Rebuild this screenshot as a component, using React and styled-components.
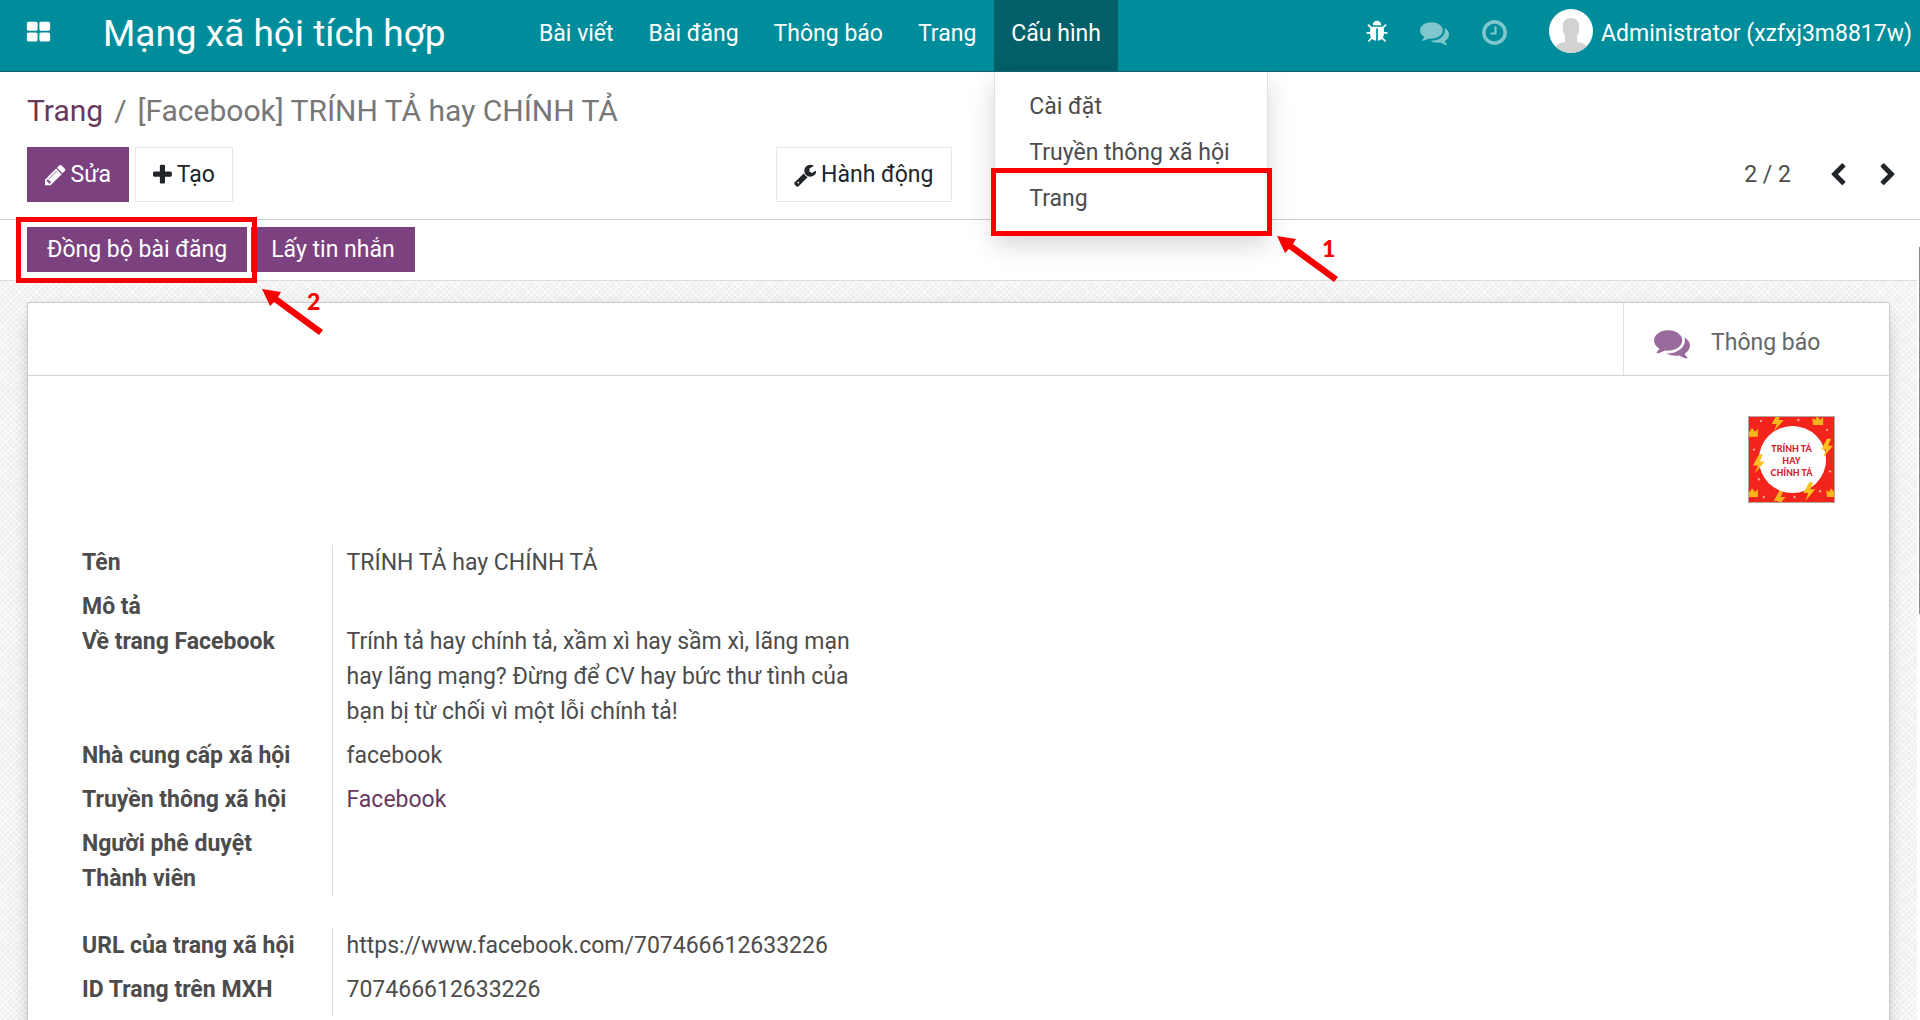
import React from 'react';
import styled, { createGlobalStyle, css } from 'styled-components';

const GlobalStyle = createGlobalStyle`
  * {
    box-sizing: border-box;
  }

  html,
  body,
  #root {
    height: 100%;
    margin: 0;
  }

  body {
    background: #fff;
    color: #4c4c4c;
    font-family: Roboto, 'Noto Sans', sans-serif;
    font-size: 23px;
    line-height: 35px;
    overflow: hidden;
  }

  a {
    color: #68395f;
    text-decoration: none;
  }

  button {
    font: inherit;
    cursor: pointer;
  }
`;

const Page = styled.div`
  display: flex;
  flex-direction: column;
  height: 100%;
`;

/* ---------- icons ---------- */

// left edge and width of every glyph, on a 1792 unit square
const BOXES = {
  pencil: [128, 1536],
  plus: [192, 1408],
  wrench: [64, 1664],
};

const ICONS = {
  apps:
    'M832 1024v384q0 52-38 90t-90 38h-512q-52 0-90-38t-38-90v-384q0-52 38-90t90-38h512q52 0 90 38t38 90zm0-768v384q0 52-38 90t-90 38h-512q-52 0-90-38t-38-90v-384q0-52 38-90t90-38h512q52 0 90 38t38 90zm896 768v384q0 52-38 90t-90 38h-512q-52 0-90-38t-38-90v-384q0-52 38-90t90-38h512q52 0 90 38t38 90zm0-768v384q0 52-38 90t-90 38h-512q-52 0-90-38t-38-90v-384q0-52 38-90t90-38h512q52 0 90 38t38 90z',
  bug:
    'M1696 960q0 26-19 45t-45 19h-224q0 171-67 290l208 209q19 19 19 45t-19 45q-18 19-45 19t-45-19l-198-197q-5 5-15 13t-42 28.5-65 36.5-82 29-97 13v-896h-128v896q-51 0-101.5-13.5t-87-33-66-39-43.5-32.5l-15-14-183 207q-20 21-48 21-24 0-43-16-19-18-20.5-44.5t15.5-46.5l202-227q-58-114-58-274h-224q-26 0-45-19t-19-45 19-45 45-19h224v-294l-173-173q-19-19-19-45t19-45 45-19 45 19l173 173h844l173-173q19-19 45-19t45 19 19 45-19 45l-173 173v294h224q26 0 45 19t19 45zm-480-576h-640q0-133 93.5-226.5t226.5-93.5 226.5 93.5 93.5 226.5z',
  comments:
    'M1408 768q0 139-94 257t-256.5 186.5-353.5 68.5q-86 0-176-16-124 88-278 128-36 9-86 16h-3q-11 0-20.5-8t-11.5-21q-1-3-1-6.5t.5-6.5 2-6l2.5-5 3.5-5.5 4-5 4.5-5 4-4.5q5-6 23-25t26-29.5 22.5-29 25-38.5 20.5-44q-124-72-195-177t-71-224q0-139 94-257t256.5-186.5 353.5-68.5 353.5 68.5 256.5 186.5 94 257zm384 256q0 120-71 224.5t-195 176.5q10 24 20.5 44t25 38.5 22.5 29 26 29.5 23 25q1 1 4 4.5t4.5 5 4 5 3.5 5.5l2.5 5 2 6 .5 6.5-1 6.5q-3 14-13 22t-22 7q-50-7-86-16-154-40-278-128-90 16-176 16-271 0-472-132 58 4 88 4 161 0 309-45t264-129q125-92 192-212t67-254q0-77-23-152 129 71 204 178t75 230z',
  clock:
    'M1024 544v448q0 14-9 23t-23 9h-320q-14 0-23-9t-9-23v-64q0-14 9-23t23-9h224v-352q0-14 9-23t23-9h64q14 0 23 9t9 23zm416 352q0-148-73-273t-198-198-273-73-273 73-198 198-73 273 73 273 198 198 273 73 273-73 198-198 73-273zm224 0q0 209-103 385.5t-279.5 279.5-385.5 103-385.5-103-279.5-279.5-103-385.5 103-385.5 279.5-279.5 385.5-103 385.5 103 279.5 279.5 103 385.5z',
  pencil:
    'M491 1536l91-91-235-235-91 91v107h128v128h107zm523-928q0-22-22-22-10 0-17 7l-542 542q-7 7-7 17 0 22 22 22 10 0 17-7l542-542q7-7 7-17zm-54-192l416 416-832 832h-416v-416zm683 96q0 53-37 90l-166 166-416-416 166-165q36-38 90-38 53 0 91 38l235 234q37 39 37 91z',
  plus:
    'M1600 736v192q0 40-28 68t-68 28h-416v416q0 40-28 68t-68 28h-192q-40 0-68-28t-28-68v-416h-416q-40 0-68-28t-28-68v-192q0-40 28-68t68-28h416v-416q0-40 28-68t68-28h192q40 0 68 28t28 68v416h416q40 0 68 28t28 68z',
  wrench:
    'M448 1472q0-26-19-45t-45-19-45 19-19 45 19 45 45 19 45-19 19-45zm644-420l-682 682q-37 37-90 37-52 0-91-37l-106-108q-38-36-38-90 0-53 38-91l681-681q39 98 114.5 173.5t173.5 114.5zm634-435q0 39-23 106-47 134-164.5 217.5t-258.5 83.5q-185 0-316.5-131.5t-131.5-316.5 131.5-316.5 316.5-131.5q58 0 121.5 16.5t107.5 46.5q16 11 16 28t-16 28l-293 169v224l193 107q5-3 79-48.5t135.5-81 70.5-35.5q15 0 23.5 10t8.5 25z',
  previous:
    'M1427 301l-531 531 531 531q19 19 19 45t-19 45l-166 166q-19 19-45 19t-45-19l-742-742q-19-19-19-45t19-45l742-742q19-19 45-19t45 19l166 166q19 19 19 45t-19 45z',
  next:
    'M1363 877l-742 742q-19 19-45 19t-45-19l-166-166q-19-19-19-45t19-45l531-531-531-531q-19-19-19-45t19-45l166-166q19-19 45-19t45 19l742 742q19 19 19 45t-19 45z',
};

const Svg = styled.svg`
  display: block;
  flex: none;
  height: ${({ $size }) => $size}px;
  fill: currentColor;
`;

const Icon = ({ name, size = 24 }) => {
  const [left, width] = BOXES[name] || [0, 1792];

  return (
    <Svg $size={size} viewBox={`${left} 0 ${width} 1792`} aria-hidden="true">
      <path d={ICONS[name]} />
    </Svg>
  );
};

/* ---------- red callouts ---------- */

const Callout = styled.span`
  position: absolute;
  z-index: 1;
  inset: ${({ $inset }) => $inset};
  border: 5px solid #f90000;
  pointer-events: none;
`;

const Pointer = styled.span`
  position: absolute;
  top: 100%;
  left: 100%;
  width: 60px;
  margin: ${({ $drop }) => $drop}px 0 0 10px;
  padding-right: 2px;
  color: #f90000;
  font-family: Lato, sans-serif;
  font-weight: 900;
  font-size: 23px;
  line-height: 24px;
  text-align: right;
`;

const ArrowSvg = styled.svg`
  position: absolute;
  top: 0;
  left: 0;
`;

const Highlight = ({ inset, step, drop }) => (
  <Callout $inset={inset}>
    <Pointer $drop={drop}>
      <ArrowSvg width="62" height="46" viewBox="0 0 62 46" aria-hidden="true">
        <path d="M0 0L19 3L16 8L61 41L57 46L12 13L8 17Z" fill="#f90000" />
      </ArrowSvg>
      {step}
    </Pointer>
  </Callout>
);

/* ---------- navbar ---------- */

const Navbar = styled.header`
  display: flex;
  flex: none;
  height: 72px;
  background: #008d9b;
  border-bottom: 1px solid #17606f;
  color: #fff;
`;

const AppsButton = styled.button`
  display: flex;
  align-items: center;
  width: 77px;
  padding: 0 0 6px 26px;
  border: 0;
  background: none;
  color: #fff;
`;

const Brand = styled.a`
  width: 445px;
  padding-left: 26px;
  color: #fff;
  font-size: 37px;
  line-height: 67px;
  white-space: nowrap;
`;

const Menu = styled.nav`
  display: flex;
  flex: 1;
  gap: 1px;
`;

const MenuItem = styled.div`
  position: relative;
`;

const MenuLink = styled.a`
  display: block;
  height: 71px;
  padding: 0 17px;
  color: #fff;
  line-height: 67px;
  white-space: nowrap;
  background: ${({ $active }) => ($active ? '#005f68' : 'transparent')};
`;

const Dropdown = styled.div`
  position: absolute;
  z-index: 2;
  top: 72px;
  left: 0;
  width: 274px;
  padding: 12px 0 10px;
  background: #fff;
  border: 1px solid #dee2e6;
  border-top: 0;
  box-shadow: 0 12px 24px rgba(0, 0, 0, 0.16);
`;

const DropdownItem = styled.a`
  position: relative;
  display: block;
  padding: 5px 34px 6px;
  color: #4c4c4c;
  white-space: nowrap;
`;

const Systray = styled.div`
  display: flex;
  align-items: flex-start;
  padding: 16px 8px 0 0;
`;

const TrayButton = styled.button`
  display: flex;
  align-items: center;
  height: 32px;
  margin-right: 31px;
  padding: 0;
  border: 0;
  background: none;
  color: ${({ $dim }) => ($dim ? '#7fc6cd' : '#fff')};
`;

const UserMenu = styled.button`
  display: flex;
  align-items: center;
  gap: 8px;
  height: 44px;
  margin: -7px 0 0 9px;
  padding: 0;
  border: 0;
  background: none;
  color: #fff;
  white-space: nowrap;
`;

const UserName = styled.span`
  padding-top: 4px;
`;

const UserAvatar = () => (
  <svg width="44" height="44" viewBox="0 0 44 44" aria-hidden="true">
    <defs>
      <clipPath id="avatar">
        <circle cx="22" cy="22" r="22" />
      </clipPath>
    </defs>
    <g clipPath="url(#avatar)">
      <rect width="44" height="44" fill="#fff" />
      <path
        d="M14 17Q14 9 22 9T30 17Q31 22 28 27V33Q37 34 40 40V44H4V40Q8 34 16 33V27Q13 22 14 17Z"
        fill="#d2d2d2"
      />
    </g>
  </svg>
);

/* ---------- control panel ---------- */

const ControlPanel = styled.section`
  flex: none;
  padding: 16px 7px 17px 27px;
  border-bottom: 1px solid #ccc;
`;

const Breadcrumb = styled.h1`
  display: flex;
  gap: 11px;
  margin: 0 0 14px;
  color: #777;
  font-size: 30px;
  font-weight: 400;
  line-height: 45px;
`;

const Toolbar = styled.div`
  display: grid;
  grid-template-columns: 39.7% 1fr;
  align-items: center;
`;

const Group = styled.div`
  display: flex;
  align-items: center;
  justify-content: ${({ $spread }) => ($spread ? 'space-between' : 'flex-start')};
  gap: ${({ $gap = 0 }) => $gap}px;
`;

const Button = styled.button`
  display: flex;
  align-items: center;
  gap: 5px;
  height: 55px;
  padding: 0 17px;
  border: 1px solid #e6e8ea;
  background: #fff;
  color: #212529;
  white-space: nowrap;

  ${({ $primary }) =>
    $primary &&
    css`
      border-color: #7c4280;
      background: #7c4280;
      color: #fff;
    `}
`;

const PagerButton = styled.button`
  display: flex;
  width: 50px;
  justify-content: center;
  padding: 0;
  border: 0;
  background: none;
  color: #212529;
`;

const PagerCount = styled.span`
  margin-right: 22px;
`;

/* ---------- form ---------- */

const Content = styled.main`
  display: flex;
  flex: 1;
  flex-direction: column;
  min-height: 0;
  margin-right: 3px;
  background-color: #f0f0f0;
  background-image: repeating-linear-gradient(45deg, rgba(255, 255, 255, 0.7) 0 1px, transparent 1px 4px),
    repeating-linear-gradient(-45deg, rgba(255, 255, 255, 0.7) 0 1px, transparent 1px 4px);
`;

const StatusBar = styled.div`
  display: flex;
  flex: none;
  gap: 4px;
  height: 61px;
  padding: 7px 27px 0;
  background: #fff;
  border-bottom: 1px solid #ddd;
`;

const StatusButton = styled.button`
  position: relative;
  height: 45px;
  padding: 0 20px;
  border: 0;
  background: #7c4280;
  color: #fff;
  white-space: nowrap;
`;

const Sheet = styled.article`
  flex: 1 0 auto;
  margin: 21px 27px 0;
  background: #fff;
  border: 1px solid #c8c8d3;
  border-bottom: 0;
  box-shadow: 0 5px 20px -10px rgba(0, 0, 0, 0.6);
`;

const ButtonBox = styled.div`
  display: flex;
  justify-content: flex-end;
  height: 73px;
  border-bottom: 1px solid #ced4da;
`;

const StatButton = styled.button`
  display: flex;
  align-items: center;
  gap: 21px;
  width: 266px;
  padding: 7px 30px 0;
  border: 0;
  border-left: 1px solid #dee2e6;
  background: #fff;
  color: #666;

  svg {
    color: #9b6a9c;
  }
`;

const SheetBody = styled.div`
  padding: 40px 54px 0;
`;

const Picture = styled.svg`
  display: block;
  width: 87px;
  height: 87px;
  margin: 0 0 42px auto;
  border: 1px solid #b5a4a4;
`;

const Fields = styled.table`
  width: 46%;
  margin-bottom: 32px;
  border-collapse: collapse;
`;

const Label = styled.th`
  width: 250px;
  padding: 0 0 ${({ $tight }) => ($tight ? 0 : 9)}px;
  border-right: 1px solid #ddd;
  font-weight: 700;
  text-align: left;
  vertical-align: top;
  white-space: nowrap;
`;

const Value = styled.td`
  padding: 0 0 ${({ $tight }) => ($tight ? 0 : 9)}px 14px;
  vertical-align: top;
`;

const ScrollThumb = styled.div`
  position: absolute;
  top: 247px;
  right: 0;
  width: 1px;
  height: 36%;
  background: #8a8a8a;
`;

const bolt = 'M6 0L0 11H5L2 19L12 7H7L10 0Z';
const crown = 'M0 2L3 4L5 0L8 4L11 1L11 9H1Z';

const PagePicture = () => (
  <Picture viewBox="0 0 86 86" role="img" aria-label="TRÍNH TẢ HAY CHÍNH TẢ">
    <rect width="86" height="86" fill="#f3241b" />
    <g fill="#f9b51e">
      <path d={bolt} transform="translate(23 -4)" />
      <path d={bolt} transform="translate(25 74)" />
      <path d={crown} transform="translate(64 -1)" />
      <path d={crown} transform="translate(-2 11)" />
      <path d={crown} transform="translate(-2 72)" />
      <path d={crown} transform="translate(78 72)" />
    </g>
    <g fill="#ffa39a">
      {[[12, 4], [50, 3], [79, 13], [5, 33], [82, 55], [10, 63], [72, 75], [15, 81], [46, 81]].map(
        ([x, y]) => (
          <circle key={`${x}-${y}`} cx={x} cy={y} r="1.2" />
        ),
      )}
    </g>
    <circle cx="44" cy="43" r="34" fill="#fff" />
    <g fill="#fcc01f">
      <path d={bolt} transform="translate(4 38)" />
      <path d={bolt} transform="translate(73 22)" />
      <path d={bolt} transform="translate(55 66)" />
    </g>
    <g fill="#d3222c" fontFamily="Lato, sans-serif" fontWeight="900" fontSize="9" textAnchor="middle">
      <text x="43" y="35">TRÍNH TẢ</text>
      <text x="43" y="48">HAY</text>
      <text x="43" y="60">CHÍNH TẢ</text>
    </g>
  </Picture>
);

const MENU = ['Bài viết', 'Bài đăng', 'Thông báo', 'Trang'];

const PROFILE = [
  { label: 'Tên', value: 'TRÍNH TẢ hay CHÍNH TẢ' },
  { label: 'Mô tả', tight: true },
  {
    label: 'Về trang Facebook',
    value:
      'Trính tả hay chính tả, xầm xì hay sầm xì, lãng mạn hay lãng mạng? Đừng để CV hay bức thư tình của bạn bị từ chối vì một lỗi chính tả!',
  },
  { label: 'Nhà cung cấp xã hội', value: 'facebook' },
  { label: 'Truyền thông xã hội', value: <a href="#facebook">Facebook</a> },
  { label: 'Người phê duyệt', tight: true },
  { label: 'Thành viên', tight: true },
];

const IDENTITY = [
  { label: 'URL của trang xã hội', value: 'https://www.facebook.com/707466612633226' },
  { label: 'ID Trang trên MXH', value: '707466612633226' },
];

const FieldTable = ({ rows }) => (
  <Fields>
    <tbody>
      {rows.map(({ label, value, tight }) => (
        <tr key={label}>
          <Label scope="row" $tight={tight}>
            {label}
          </Label>
          <Value $tight={tight}>{value}</Value>
        </tr>
      ))}
    </tbody>
  </Fields>
);

const App = () => (
  <Page>
    <GlobalStyle />
    <Navbar>
      <AppsButton type="button" aria-label="Ứng dụng">
        <Icon name="apps" size={25} />
      </AppsButton>
      <Brand href="#home">Mạng xã hội tích hợp</Brand>
      <Menu>
        {MENU.map(item => (
          <MenuItem key={item}>
            <MenuLink href="#menu">{item}</MenuLink>
          </MenuItem>
        ))}
        <MenuItem>
          <MenuLink href="#config" $active>
            Cấu hình
          </MenuLink>
          <Dropdown>
            <DropdownItem href="#settings">Cài đặt</DropdownItem>
            <DropdownItem href="#media">Truyền thông xã hội</DropdownItem>
            <DropdownItem href="#pages">
              Trang
              <Highlight inset="-8px -5px -14px -4px" step="1" drop={5} />
            </DropdownItem>
          </Dropdown>
        </MenuItem>
      </Menu>
      <Systray>
        <TrayButton type="button" aria-label="Gỡ lỗi">
          <Icon name="bug" size={24} />
        </TrayButton>
        <TrayButton type="button" aria-label="Hội thoại" $dim>
          <Icon name="comments" size={29} />
        </TrayButton>
        <TrayButton type="button" aria-label="Hoạt động" $dim>
          <Icon name="clock" size={29} />
        </TrayButton>
        <UserMenu type="button">
          <UserAvatar />
          <UserName>Administrator (xzfxj3m8817w)</UserName>
        </UserMenu>
      </Systray>
    </Navbar>

    <ControlPanel>
      <Breadcrumb>
        <a href="#pages">Trang</a>
        <span>/</span>
        <span>[Facebook] TRÍNH TẢ hay CHÍNH TẢ</span>
      </Breadcrumb>
      <Toolbar>
        <Group $gap={6}>
          <Button type="button" $primary>
            <Icon name="pencil" />
            Sửa
          </Button>
          <Button type="button">
            <Icon name="plus" />
            Tạo
          </Button>
        </Group>
        <Group $spread>
          <Button type="button">
            <Icon name="wrench" />
            Hành động
          </Button>
          <Group>
            <PagerCount>2 / 2</PagerCount>
            <PagerButton type="button" aria-label="Trước">
              <Icon name="previous" />
            </PagerButton>
            <PagerButton type="button" aria-label="Sau">
              <Icon name="next" />
            </PagerButton>
          </Group>
        </Group>
      </Toolbar>
    </ControlPanel>

    <Content>
      <StatusBar>
        <StatusButton type="button">
          Đồng bộ bài đăng
          <Highlight inset="-10px -10px -11px -11px" step="2" drop={11} />
        </StatusButton>
        <StatusButton type="button">Lấy tin nhắn</StatusButton>
      </StatusBar>
      <Sheet>
        <ButtonBox>
          <StatButton type="button">
            <Icon name="comments" size={36} />
            Thông báo
          </StatButton>
        </ButtonBox>
        <SheetBody>
          <PagePicture />
          <FieldTable rows={PROFILE} />
          <FieldTable rows={IDENTITY} />
        </SheetBody>
      </Sheet>
    </Content>
    <ScrollThumb />
  </Page>
);

export default App;
